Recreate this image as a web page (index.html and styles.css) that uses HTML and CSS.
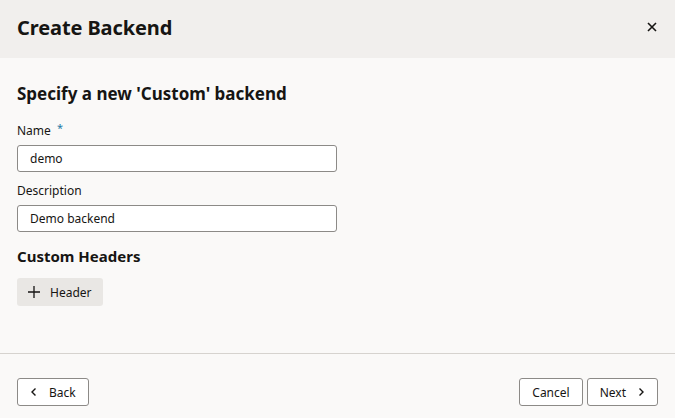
FILE: index.html
```html
<!DOCTYPE html>
<html lang="en">
<head>
<meta charset="utf-8">
<title>Create Backend</title>
<link rel="stylesheet" href="styles.css">
</head>
<body>
<div class="dialog">
  <header class="dlg-header">
    <h1 class="dlg-title">Create Backend</h1>
    <button class="close-btn" aria-label="Close">
      <svg width="10" height="10" viewBox="0 0 10 10"><path d="M1 1L9 9M9 1L1 9" stroke="#161513" stroke-width="1.6" fill="none"/></svg>
    </button>
  </header>
  <main class="dlg-body">
    <h2 class="section-title">Specify a new 'Custom' backend</h2>
    <div class="field">
      <label class="field-label">Name <span class="req">*</span></label>
      <div class="input">demo</div>
    </div>
    <div class="field">
      <label class="field-label">Description</label>
      <div class="input">Demo backend</div>
    </div>
    <h3 class="sub-title">Custom Headers</h3>
    <button class="btn-add">
      <svg width="14" height="14" viewBox="0 0 14 14"><path d="M7 1V13M1 7H13" stroke="#161513" stroke-width="1.3" fill="none"/></svg>
      <span>Header</span>
    </button>
  </main>
  <footer class="dlg-footer">
    <button class="btn">
      <svg width="8" height="10" viewBox="0 0 8 10"><path d="M5.5 1.5L2 5L5.5 8.5" stroke="#161513" stroke-width="1.4" fill="none"/></svg>
      <span>Back</span>
    </button>
    <div class="right-btns">
      <button class="btn">Cancel</button>
      <button class="btn">
        <span>Next</span>
        <svg width="8" height="10" viewBox="0 0 8 10"><path d="M2.5 1.5L6 5L2.5 8.5" stroke="#161513" stroke-width="1.4" fill="none"/></svg>
      </button>
    </div>
  </footer>
</div>
</body>
</html>
```

FILE: styles.css
```css
html, body {
  margin: 0;
  padding: 0;
  background: #faf9f8;
}
body {
  font-family: "Noto Sans", "Open Sans", sans-serif;
  color: #161513;
  width: 675px;
  height: 418px;
  overflow: hidden;
}
.dialog {
  display: flex;
  flex-direction: column;
  height: 418px;
}
.dlg-header {
  background: #f1efed;
  height: 58px;
  display: flex;
  align-items: center;
  justify-content: space-between;
  padding: 0 16px 0 17px;
  box-sizing: border-box;
}
.dlg-title {
  margin: 0;
  font-size: 20px;
  font-weight: 700;
  letter-spacing: -0.1px;
  position: relative;
  top: -2px;
}
.close-btn {
  background: none;
  border: 0;
  padding: 0;
  width: 14px;
  height: 14px;
  display: flex;
  align-items: center;
  justify-content: center;
  position: relative;
  top: -2px;
}
.dlg-body {
  flex: 1;
  padding: 24px 17px 0;
  box-sizing: border-box;
  border-bottom: 1px solid #d6d3cf;
}
.section-title {
  margin: 0 0 17px;
  font-size: 17px;
  font-weight: 700;
  line-height: 24px;
}
.field {
  display: flex;
  flex-direction: column;
  margin-bottom: 11px;
}
.field-label {
  font-size: 12px;
  line-height: 16px;
  margin-bottom: 6px;
}
.req {
  color: #227aa6;
  margin-left: 3px;
  font-size: 11px;
  position: relative;
  top: -3px;
}
.input {
  width: 320px;
  height: 27px;
  box-sizing: border-box;
  border: 1px solid #8c8a87;
  border-radius: 3px;
  background: #fff;
  font-size: 12px;
  line-height: 25px;
  padding: 0 12px;
}
.sub-title {
  margin: 13px 0 11px;
  font-size: 15px;
  font-weight: 700;
  line-height: 22px;
}
.btn-add {
  display: flex;
  align-items: center;
  gap: 9px;
  height: 28px;
  width: 86px;
  box-sizing: border-box;
  padding: 0 0 0 10px;
  border: 0;
  border-radius: 3px;
  background: #e9e7e4;
  font-family: inherit;
  font-size: 12px;
  color: #161513;
}
.dlg-footer {
  height: 64px;
  display: flex;
  align-items: flex-start;
  justify-content: space-between;
  padding: 24px 17px 0;
  box-sizing: border-box;
}
.right-btns {
  display: flex;
  gap: 4px;
}
.btn {
  display: flex;
  align-items: center;
  justify-content: center;
  gap: 11px;
  height: 28px;
  box-sizing: border-box;
  padding: 0 12px;
  border: 1px solid #8c8a87;
  border-radius: 3px;
  background: #fff;
  font-family: inherit;
  font-size: 12px;
  color: #161513;
}
```
